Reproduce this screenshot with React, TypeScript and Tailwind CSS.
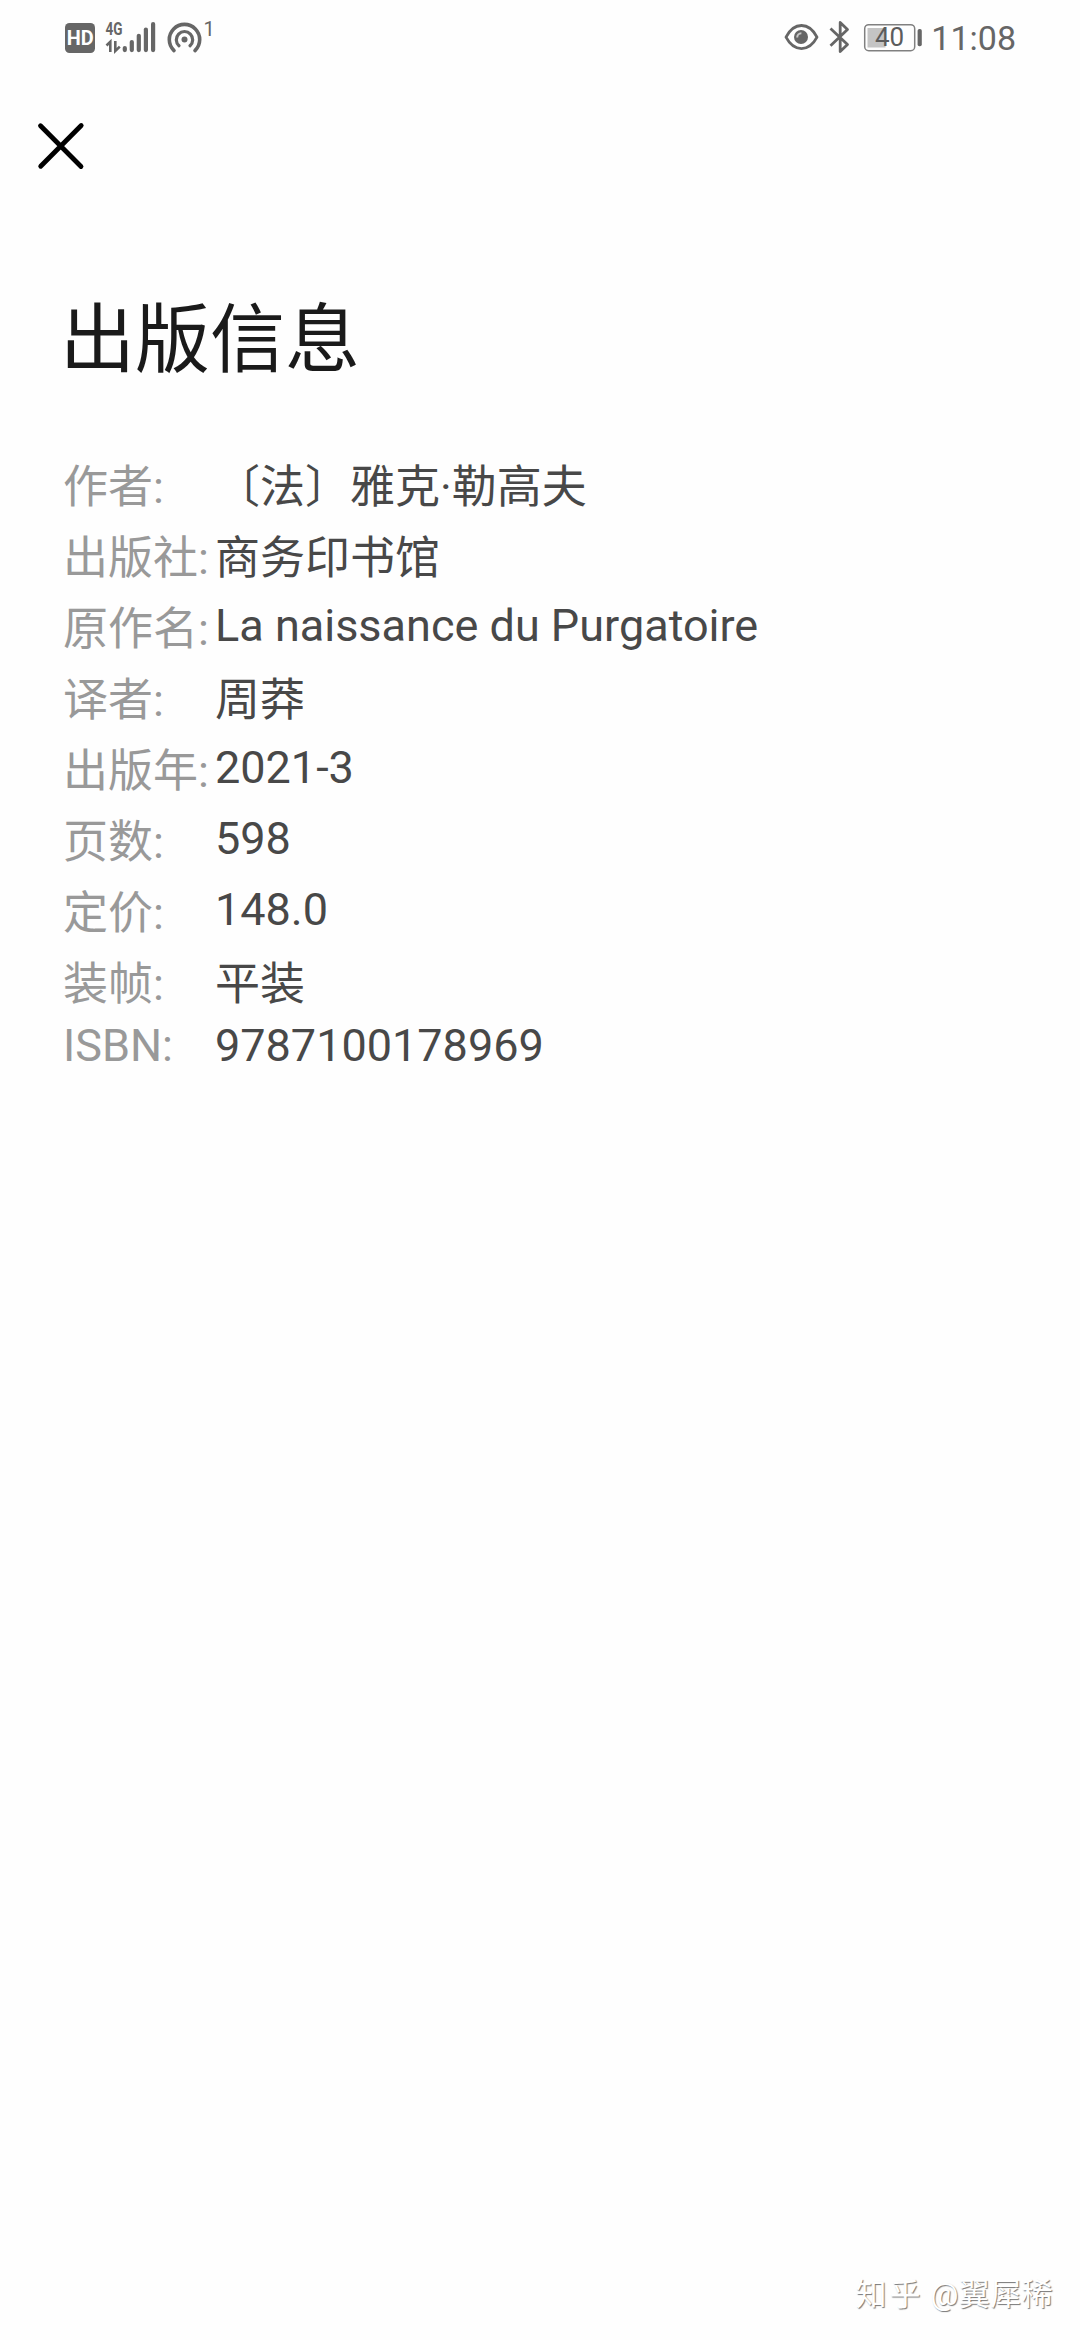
import clsx from "clsx";

type InfoItem = {
  label: string;
  value: string;
  latin?: boolean;
};

const items: InfoItem[] = [
  { label: "作者:", value: "〔法〕雅克·勒高夫" },
  { label: "出版社:", value: "商务印书馆" },
  { label: "原作名:", value: "La naissance du Purgatoire", latin: true },
  { label: "译者:", value: "周莽" },
  { label: "出版年:", value: "2021-3", latin: true },
  { label: "页数:", value: "598", latin: true },
  { label: "定价:", value: "148.0", latin: true },
  { label: "装帧:", value: "平装" },
];

function SignalIcons() {
  return (
    <svg width="170" height="60" viewBox="50 10 170 60" fill="#666666">
      <rect x="65" y="23" width="30" height="30" rx="4.5" />
      <text x="66.8" y="45.2" fontSize="20" fontWeight="700" fill="#fefefe" textLength="27" lengthAdjust="spacingAndGlyphs">
        HD
      </text>
      <text x="105.5" y="35.2" fontSize="18.5" fontWeight="700" textLength="17" lengthAdjust="spacingAndGlyphs">
        4G
      </text>
      <path d="M106.5 45.5 L110.3 41.8 V52" fill="none" stroke="#666666" strokeWidth="2.6" />
      <path d="M115.3 41 V51 L119.8 46.6" fill="none" stroke="#666666" strokeWidth="2.6" />
      <rect x="122.7" y="46" width="4.2" height="6.2" rx="2.1" />
      <rect x="129.7" y="40" width="4.2" height="12.2" rx="2.1" />
      <rect x="136.7" y="33.7" width="4.2" height="18.5" rx="2.1" />
      <rect x="143.8" y="27.5" width="4.2" height="24.7" rx="2.1" />
      <rect x="151" y="22" width="4.2" height="30.2" rx="2.1" />
      <circle cx="184.5" cy="39.5" r="3" />
      <g fill="none" stroke="#666666" strokeWidth="3.6" strokeLinecap="round">
        <path d="M179 45.8 A8.2 8.2 0 1 1 190 45.8" strokeWidth="3.2" />
        <path d="M174 50.6 A15.2 15.2 0 1 1 195 50.6" />
      </g>
      <text x="203.5" y="36" fontSize="20">
        1
      </text>
    </svg>
  );
}

function DeviceIcons() {
  return (
    <svg width="146" height="60" viewBox="780 10 146 60" fill="#666666">
      <path
        d="M786 37.2 C794 21.6 809 21.6 817 37.2 C809 52.4 794 52.4 786 37.2 Z"
        fill="none"
        stroke="#666666"
        strokeWidth="2.8"
        strokeLinejoin="round"
      />
      <circle cx="801" cy="37" r="7" />
      <path d="M797.2 37.4 A4.2 4.2 0 0 1 801.4 33.2" fill="none" stroke="#c8c8c8" strokeWidth="2" />
      <path
        d="M830.5 28.5 L847.5 44.5 L840.2 51.5 V22.5 L847.5 29.5 L830.5 45.8"
        fill="none"
        stroke="#666666"
        strokeWidth="2.8"
        strokeLinejoin="round"
      />
      <rect x="864.7" y="24.7" width="50" height="26" rx="4" fill="none" stroke="#808080" strokeWidth="1.5" />
      <rect x="867.5" y="28" width="18" height="19.5" fill="#c4c4c4" />
      <text x="875" y="46.2" fontSize="26" fill="#5c5c5c">
        40
      </text>
      <rect x="917.6" y="29" width="4.2" height="17.3" rx="1.8" />
    </svg>
  );
}

function StatusBar() {
  return (
    <header className="flex h-[70px] items-end justify-between pl-[50px] pr-[64px]">
      <SignalIcons />
      <div className="flex items-end">
        <DeviceIcons />
        <span className="ml-[5px] text-[34px] leading-[64px] text-[#666666]">11:08</span>
      </div>
    </header>
  );
}

function InfoRow({ label, value, latin }: InfoItem) {
  return (
    <div className="flex h-[71px] items-start leading-[71px]">
      <dt className="w-[152px] shrink-0 text-[#999999]">{label}</dt>
      <dd className={clsx("text-[#484848]", latin && "-mt-1")}>{value}</dd>
    </div>
  );
}

export default function App() {
  return (
    <div className="flex h-[2340px] w-[1080px] flex-col overflow-hidden bg-[#fefefe] font-['Roboto','Noto_Sans_CJK_SC',sans-serif]">
      <StatusBar />
      <nav className="flex h-[152px] items-center pl-[36px]">
        <button type="button" aria-label="关闭">
          <svg width="50" height="50" viewBox="0 0 50 50" stroke="#000000" strokeWidth="4.8" strokeLinecap="round">
            <path d="M4.5 4.7 L45 45.5 M45.2 4.5 L4.7 45.2" />
          </svg>
        </button>
      </nav>
      <main className="px-[63px] pt-[63px]">
        <h1 className="-ml-[3px] text-[75px] leading-[110px] text-[#1a1a1a]">出版信息</h1>
        <dl className="mt-[57px] text-[45px] whitespace-nowrap">
          {items.map((item) => (
            <InfoRow key={item.label} {...item} />
          ))}
          <div className="-mt-[10px] flex leading-[71px]">
            <dt className="w-[152px] shrink-0 text-[#999999]">ISBN:</dt>
            <dd className="text-[#484848]">9787100178969</dd>
          </div>
        </dl>
      </main>
      <footer className="mt-auto flex justify-end gap-[7px] pr-[27px] pb-[22px] text-[31px] leading-[46px] text-white [text-shadow:1px_1px_1px_#777777]">
        <span className="tracking-[3px]">知乎</span>
        <span className="tracking-[0.4px]">@翼犀稀</span>
      </footer>
    </div>
  );
}
